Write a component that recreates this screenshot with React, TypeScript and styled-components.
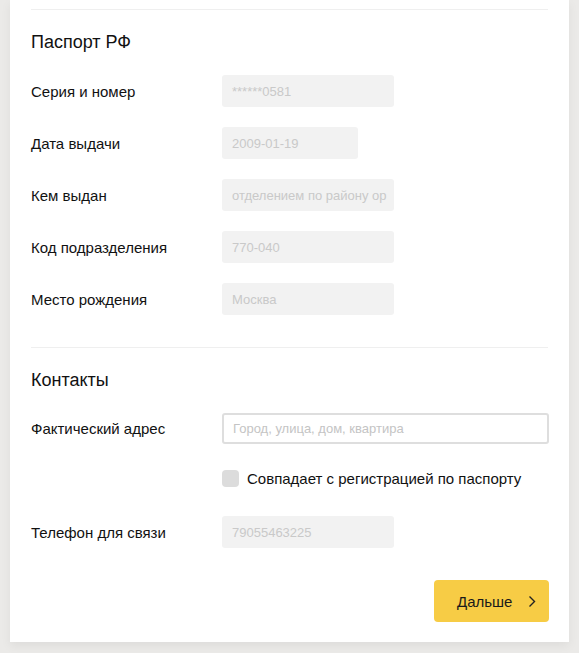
import React from "react";
import styled, { createGlobalStyle } from "styled-components";

const GlobalStyle = createGlobalStyle`
  html, body {
    margin: 0;
    padding: 0;
    background: #ebeae8;
    font-family: "Liberation Sans", Arial, sans-serif;
    color: #111;
  }
`;

const Page = styled.div`
  width: 579px;
  height: 653px;
  box-sizing: border-box;
  padding: 0 10px;
  background: #ebeae8;
  overflow: hidden;
`;

const Card = styled.div`
  background: #fff;
  padding: 9px 21px 20px 21px;
  box-shadow: 0 4px 10px rgba(0, 0, 0, 0.06);
`;

const Divider = styled.div`
  height: 1px;
  background: #efefef;
`;

const Section = styled.section`
  display: flex;
  flex-direction: column;
  padding-top: 21px;
`;

const Heading = styled.h2`
  margin: 0 0 22px 0;
  font-size: 18px;
  line-height: 22px;
  font-weight: 400;
  color: #111;
`;

const Rows = styled.div`
  display: flex;
  flex-direction: column;
  gap: 20px;
`;

const Row = styled.div`
  display: grid;
  grid-template-columns: 191px 1fr;
  align-items: center;
`;

const Label = styled.label`
  font-size: 15px;
  color: #111;
`;

const ReadOnlyField = styled.div<{ $width: number }>`
  width: ${(p) => p.$width}px;
  height: 32px;
  box-sizing: border-box;
  border-radius: 3px;
  background: #f2f2f2;
  padding: 0 10px;
  display: flex;
  align-items: center;
  font-size: 13px;
  color: #c9c9c9;
  white-space: nowrap;
  overflow: hidden;
`;

const TextInput = styled.input`
  width: 327px;
  height: 31px;
  box-sizing: border-box;
  border: 2px solid #dedede;
  border-radius: 3px;
  padding: 0 9px;
  font-family: inherit;
  font-size: 13px;
  outline: none;
  &::placeholder {
    color: #c4c4c4;
  }
`;

const CheckRow = styled.div`
  display: flex;
  align-items: center;
  gap: 8px;
  margin: 26px 0 29px 191px;
  font-size: 15px;
  color: #111;
`;

const CheckBox = styled.span`
  width: 17px;
  height: 17px;
  border-radius: 4px;
  background: #dcdcdc;
`;

const Footer = styled.div`
  display: flex;
  justify-content: flex-end;
  margin: 32px -1px 0 0;
`;

const NextButton = styled.button`
  width: 115px;
  height: 42px;
  border: none;
  border-radius: 4px;
  background: #f7cc45;
  display: flex;
  align-items: center;
  padding: 0 0 0 23px;
  gap: 16px;
  font-family: inherit;
  font-size: 15px;
  color: #1a1a1a;
  cursor: pointer;
`;

const passport = [
  { label: "Серия и номер", value: "******0581", width: 172 },
  { label: "Дата выдачи", value: "2009-01-19", width: 136 },
  { label: "Кем выдан", value: "отделением по району ор", width: 172 },
  { label: "Код подразделения", value: "770-040", width: 172 },
  { label: "Место рождения", value: "Москва", width: 172 },
];

export default function App() {
  return (
    <Page>
      <GlobalStyle />
      <Card>
        <Divider />
        <Section>
          <Heading>Паспорт РФ</Heading>
          <Rows>
            {passport.map((f) => (
              <Row key={f.label}>
                <Label>{f.label}</Label>
                <ReadOnlyField $width={f.width}>{f.value}</ReadOnlyField>
              </Row>
            ))}
          </Rows>
        </Section>
        <div style={{ height: 32 }} />
        <Divider />
        <Section>
          <Heading>Контакты</Heading>
          <Row>
            <Label>Фактический адрес</Label>
            <TextInput placeholder="Город, улица, дом, квартира" />
          </Row>
          <CheckRow>
            <CheckBox />
            Совпадает с регистрацией по паспорту
          </CheckRow>
          <Row>
            <Label>Телефон для связи</Label>
            <ReadOnlyField $width={172}>79055463225</ReadOnlyField>
          </Row>
          <Footer>
            <NextButton>
              Дальше
              <svg width="8" height="13" viewBox="0 0 8 13" fill="none">
                <path d="M1.5 1.5 L6.5 6.5 L1.5 11.5" stroke="#222" strokeWidth="1.4" />
              </svg>
            </NextButton>
          </Footer>
        </Section>
      </Card>
    </Page>
  );
}
